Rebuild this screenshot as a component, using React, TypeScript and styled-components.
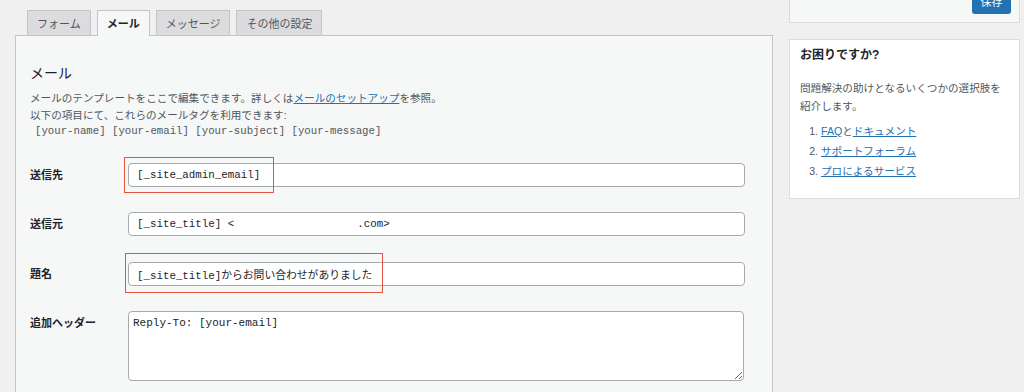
import React from 'react';
import styled, { createGlobalStyle } from 'styled-components';

const GlobalStyle = createGlobalStyle`
  body {
    margin: 0;
    background: #f0f0f1;
    font-family: "Liberation Sans", "Noto Sans CJK JP", sans-serif;
    color: #1d2327;
    overflow: hidden;
  }
`

const mono = `"Liberation Mono", "Noto Sans CJK JP", monospace`

const Page = styled.div`
  display: flex;
  align-items: flex-start;
  gap: 16px;
  padding: 0 4px 0 15px;
  height: 392px;
  overflow: hidden;
`

const Main = styled.div`
  width: 758px;
  display: flex;
  flex-direction: column;
`

const TabBar = styled.div`
  display: flex;
  align-items: flex-end;
  gap: 6px;
  padding-left: 12px;
  margin-top: 10px;
`

const Tab = styled.div<{ $active?: boolean }>`
  box-sizing: border-box;
  display: flex;
  align-items: center;
  height: ${p => (p.$active ? '26px' : '25px')};
  margin-bottom: ${p => (p.$active ? '-1px' : '0')};
  padding: 0 9px ${p => (p.$active ? '1px' : '0')};
  border: 1px solid #c3c4c7;
  border-bottom: none;
  background: ${p => (p.$active ? '#f6f7f7' : '#dcdcde')};
  color: ${p => (p.$active ? '#1d2327' : '#50575e')};
  font-size: 11px;
  font-weight: ${p => (p.$active ? 700 : 400)};
  position: relative;
  z-index: ${p => (p.$active ? 1 : 0)};
`

const Panel = styled.div`
  border: 1px solid #c3c4c7;
  background: #f6f7f7;
  padding: 28px 26px 40px 14px;
`

const Heading = styled.h2`
  margin: 0;
  font-size: 14px;
  line-height: 18px;
  font-weight: 400;
  color: #1d2327;
`

const Desc = styled.div`
  margin-top: 8px;
  font-size: 10.6px;
  line-height: 16.5px;
  color: #50575e;

  a {
    color: #2271b1;
  }
`

const Tags = styled.div`
  font-family: ${mono};
  font-size: 10.7px;
  line-height: 16.5px;
  color: #50575e;
  padding-left: 5px;
`

const FormGrid = styled.div`
  display: grid;
  grid-template-columns: 98px 617px;
  row-gap: 25.3px;
  margin-top: 23.5px;
`

const Label = styled.div`
  font-size: 11px;
  font-weight: 700;
  line-height: 24px;
  color: #1d2327;
`

const Field = styled.div`
  position: relative;
`

const Input = styled.input`
  box-sizing: border-box;
  display: block;
  width: 100%;
  height: 24px;
  padding: 0 8px;
  border: 1px solid #a7aaad;
  border-radius: 4px;
  background: #fff;
  font-family: ${mono};
  font-size: 10.8px;
  color: #1d2327;
  white-space: pre;
  outline: none;
`

const TextArea = styled.textarea`
  box-sizing: border-box;
  display: block;
  width: 616px;
  height: 70px;
  padding: 4px 4px;
  border: 1px solid #a7aaad;
  border-radius: 4px;
  background: #fff;
  font-family: ${mono};
  font-size: 11px;
  line-height: 15px;
  color: #1d2327;
  outline: none;
`

// 注釈の赤枠
const Highlight = styled.div<{ $left: number; $top: number; $w: number; $h: number }>`
  position: absolute;
  left: ${p => p.$left}px;
  top: ${p => p.$top}px;
  width: ${p => p.$w}px;
  height: ${p => p.$h}px;
  box-sizing: border-box;
  border: 1.5px solid #e2553d;
  pointer-events: none;
`

const Sidebar = styled.div`
  width: 231px;
  margin-top: -21px;
  display: flex;
  flex-direction: column;
  gap: 16px;
`

const PublishBox = styled.div`
  display: flex;
  justify-content: flex-end;
  padding: 8px;
  background: #f6f7f7;
  border: 1px solid #dcdcde;
`

const SaveButton = styled.button`
  height: 26px;
  padding: 0 8.5px;
  border: none;
  border-radius: 3px;
  background: #2271b1;
  color: #fff;
  font-family: "Noto Sans CJK JP", sans-serif;
  font-size: 11px;
`

const HelpBox = styled.div`
  background: #fff;
  border: 1px solid #dcdcde;
  padding: 6px 10px 17px;

  > h3 {
    margin: 0;
    font-size: 12px;
    line-height: 18px;
    font-weight: 700;
    color: #1d2327;
  }

  > p {
    margin: 15px 0 0;
    font-size: 10.6px;
    line-height: 18px;
    color: #50575e;
  }
`

const HelpList = styled.ol`
  margin: 6px 0 0;
  padding-left: 21px;
  font-size: 10.6px;
  line-height: 20px;
  color: #50575e;

  a {
    color: #2271b1;
  }
`

const tabs = ['フォーム', 'メール', 'メッセージ', 'その他の設定']

export default function App() {
  return (
    <>
      <GlobalStyle />
      <Page>
        <Main>
          <TabBar>
            {tabs.map(t => <Tab key={t} $active={t === 'メール'}>{t}</Tab>)}
          </TabBar>
          <Panel>
            <Heading>メール</Heading>
            <Desc>
              メールのテンプレートをここで編集できます。詳しくは<a href="#">メールのセットアップ</a>を参照。<br />
              以下の項目にて、これらのメールタグを利用できます:
            </Desc>
            <Tags>[your-name] [your-email] [your-subject] [your-message]</Tags>
            <FormGrid>
              <Label>送信先</Label>
              <Field>
                <Input defaultValue="[_site_admin_email]" />
                <Highlight $left={-4} $top={-6} $w={150} $h={36} />
              </Field>
              <Label>送信元</Label>
              <Field>
                <Input defaultValue={'[_site_title] <                   .com>'} />
              </Field>
              <Label>題名</Label>
              <Field>
                <Input defaultValue="[_site_title]からお問い合わせがありました" />
                <Highlight $left={-3} $top={-9} $w={258} $h={40} />
              </Field>
              <Label>追加ヘッダー</Label>
              <Field>
                <TextArea defaultValue="Reply-To: [your-email]" />
              </Field>
            </FormGrid>
          </Panel>
        </Main>
        <Sidebar>
          <PublishBox>
            <SaveButton>保存</SaveButton>
          </PublishBox>
          <HelpBox>
            <h3>お困りですか?</h3>
            <p>問題解決の助けとなるいくつかの選択肢を紹介します。</p>
            <HelpList>
              <li><a href="#">FAQ</a>と<a href="#">ドキュメント</a></li>
              <li><a href="#">サポートフォーラム</a></li>
              <li><a href="#">プロによるサービス</a></li>
            </HelpList>
          </HelpBox>
        </Sidebar>
      </Page>
    </>
  );
}
